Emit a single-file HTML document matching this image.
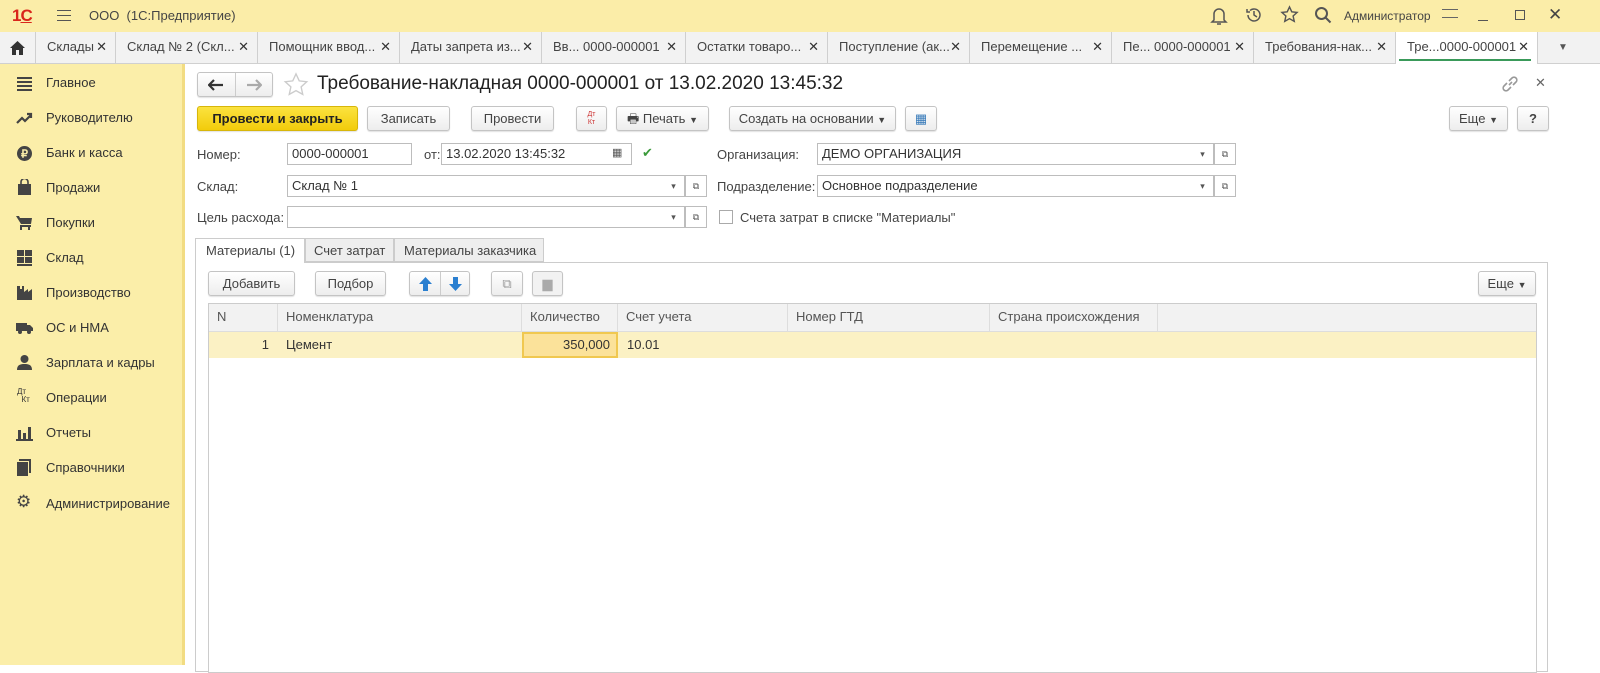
<!DOCTYPE html><html><head><meta charset="utf-8"><style>
*{box-sizing:border-box;margin:0;padding:0}
body{width:1600px;height:665px;overflow:hidden;font-family:"Liberation Sans",sans-serif;font-size:13px;color:#333;background:#fff;position:relative}
.a{position:absolute}
#top{left:0;top:0;width:1600px;height:32px;background:#fbeda8}
#tabs{left:0;top:32px;width:1600px;height:32px;background:#f2f2f2;border-bottom:1px solid #d0d0d0}
.tab{position:absolute;top:0;height:32px;border-right:1px solid #cfcfcf;line-height:30px;padding-left:11px;font-size:13px;color:#444;white-space:nowrap}
.tab .x{position:absolute;right:8px;top:0;font-size:13px;color:#333}
#side{left:0;top:64px;width:185px;height:601px;background:#fbeea9;border-right:3px solid #f2dc82}
.si{position:absolute;left:46px;font-size:13px;color:#333}
.sv{position:absolute;left:16px;width:17px;height:17px}
.btn{position:absolute;height:25px;border:1px solid #c4c4c4;border-radius:3px;background:linear-gradient(#fff,#ededed);text-align:center;line-height:23px;font-size:13px;color:#444;box-shadow:0 1px 1px rgba(0,0,0,.12)}
.inp{position:absolute;height:22px;border:1px solid #bdbdbd;background:#fff;line-height:20px;padding-left:4px;font-size:13px;color:#333}
.lbl{position:absolute;font-size:13px;color:#444}
.dd{position:absolute;width:22px;height:22px;border:1px solid #bdbdbd;background:#fff;font-size:9px;text-align:center;line-height:20px;color:#555}
.th{position:absolute;top:0;height:28px;border-right:1px solid #ddd;line-height:26px;padding-left:8px;color:#555}
</style></head><body>
<div id="top" class="a">
<div class="a" style="left:12px;top:6px;font-weight:bold;color:#d9261c;font-size:17px;letter-spacing:-1px">1<span style="text-decoration:underline">С</span></div>
<div class="a" style="left:57px;top:10px;width:14px;height:11px;border-top:1.5px solid #555;border-bottom:1.5px solid #555"><div style="margin-top:3.5px;border-top:1.5px solid #555"></div></div>
<div class="a" style="left:89px;top:8px;font-size:13px;color:#444">ООО &nbsp;(1С:Предприятие)</div>
<svg class="a" style="left:1210px;top:6px" width="18" height="20" viewBox="0 0 18 20" fill="none" stroke="#555" stroke-width="1.5"><path d="M4 14V8a5 5 0 0 1 10 0v6l2 2H2z M7 18h4"/></svg>
<svg class="a" style="left:1245px;top:6px" width="18" height="18" viewBox="0 0 18 18" fill="none" stroke="#555" stroke-width="1.5"><path d="M3 9a6 6 0 1 0 2-4.5 M2 3v3h3 M9 5v4l3 2"/></svg>
<svg class="a" style="left:1280px;top:5px" width="19" height="19" viewBox="0 0 20 20" fill="none" stroke="#555" stroke-width="1.5"><path d="M10 2l2.4 5.2 5.6.6-4.2 3.8 1.2 5.6L10 14.4 5 17.2l1.2-5.6L2 7.8l5.6-.6z"/></svg>
<svg class="a" style="left:1314px;top:6px" width="18" height="18" viewBox="0 0 18 18" fill="none" stroke="#555" stroke-width="2"><circle cx="7.5" cy="7.5" r="5.5"/><path d="M11.5 11.5l5 5"/></svg>
<div class="a" style="left:1344px;top:9px;font-size:12px;color:#444">Администратор</div>
<div class="a" style="left:1442px;top:9px;width:16px;height:9px;border-top:1.5px solid #666;border-bottom:1.5px solid #666"></div>
<div class="a" style="left:1478px;top:20px;width:10px;border-top:1.5px solid #555"></div>
<div class="a" style="left:1515px;top:10px;width:10px;height:10px;border:1.5px solid #555"></div>
<div class="a" style="left:1548px;top:5px;font-size:17px;color:#444">✕</div>
</div>
<div id="tabs" class="a">
<svg class="a" style="left:10px;top:9px" width="15" height="14" viewBox="0 0 15 14"><path d="M7.5 0L0 7h2v7h4V9h3v5h4V7h2z" fill="#333"/></svg>
<div class="tab" style="left:0;width:36px"></div>
<div class="tab" style="left:36px;width:80px">Склады<span class="x">✕</span></div>
<div class="tab" style="left:116px;width:142px">Склад № 2 (Скл...<span class="x">✕</span></div>
<div class="tab" style="left:258px;width:142px">Помощник ввод...<span class="x">✕</span></div>
<div class="tab" style="left:400px;width:142px">Даты запрета из...<span class="x">✕</span></div>
<div class="tab" style="left:542px;width:144px">Вв... 0000-000001<span class="x">✕</span></div>
<div class="tab" style="left:686px;width:142px">Остатки товаро...<span class="x">✕</span></div>
<div class="tab" style="left:828px;width:142px">Поступление (ак...<span class="x">✕</span></div>
<div class="tab" style="left:970px;width:142px">Перемещение ...<span class="x">✕</span></div>
<div class="tab" style="left:1112px;width:142px">Пе... 0000-000001<span class="x">✕</span></div>
<div class="tab" style="left:1254px;width:142px">Требования-нак...<span class="x">✕</span></div>
<div class="tab" style="left:1396px;width:142px;background:#fff;height:32px">Тре...0000-000001<span class="x">✕</span><div class="a" style="left:3px;right:6px;bottom:3px;border-top:2px solid #3a9a5a"></div></div>
<div class="a" style="left:1558px;top:10px;font-size:10px;color:#555">▼</div>
</div>
<div id="side" class="a">
<svg class="sv" style="top:11px" viewBox="0 0 17 17" fill="#444"><rect x="1" y="2" width="15" height="2"/><rect x="1" y="6" width="15" height="2"/><rect x="1" y="10" width="15" height="2"/><rect x="1" y="14" width="15" height="2"/></svg><div class="si" style="top:11px">Главное</div>
<svg class="sv" style="top:46px" viewBox="0 0 17 17" fill="none" stroke="#444" stroke-width="2.2"><path d="M1 13l5-5 3 3 6-6 M11 4h4v4"/></svg><div class="si" style="top:46px">Руководителю</div>
<svg class="sv" style="top:81px" viewBox="0 0 17 17"><circle cx="8.5" cy="8.5" r="7.5" fill="#444"/><text x="8.5" y="12.5" font-size="11" font-weight="bold" text-anchor="middle" fill="#fbeea9" font-family="Liberation Sans">₽</text></svg><div class="si" style="top:81px">Банк и касса</div>
<svg class="sv" style="top:115px" viewBox="0 0 17 17" fill="#444"><path d="M2 5h13v11H2z"/><path d="M5 5V3a3.5 3.5 0 0 1 7 0v2" stroke="#444" fill="none" stroke-width="1.6"/></svg><div class="si" style="top:116px">Продажи</div>
<svg class="sv" style="top:150px" viewBox="0 0 17 17" fill="#444"><path d="M0 2h3l1 2h12l-1 6H5z"/><rect x="4" y="11" width="11" height="2"/><rect x="4" y="13" width="2" height="3"/><rect x="12" y="13" width="2" height="3"/></svg><div class="si" style="top:151px">Покупки</div>
<svg class="sv" style="top:185px" viewBox="0 0 17 17" fill="#444"><rect x="1" y="1" width="7" height="6"/><rect x="9" y="1" width="7" height="6"/><rect x="1" y="8" width="7" height="6"/><rect x="9" y="8" width="7" height="6"/><rect x="1" y="15" width="15" height="2"/></svg><div class="si" style="top:186px">Склад</div>
<svg class="sv" style="top:220px" viewBox="0 0 17 17" fill="#444"><path d="M1 16V2h3v3h2V2h2v6l4-3v3l4-3v11z"/></svg><div class="si" style="top:221px">Производство</div>
<svg class="sv" style="top:255px" viewBox="0 0 17 17" fill="#444"><rect x="0" y="4" width="11" height="8"/><path d="M11 6h3l3 3v3h-6z"/><circle cx="4" cy="13" r="2"/><circle cx="13" cy="13" r="2"/></svg><div class="si" style="top:256px">ОС и НМА</div>
<svg class="sv" style="top:290px" viewBox="0 0 17 17" fill="#444"><circle cx="8.5" cy="5" r="4"/><path d="M1 16c0-5 3-6 7.5-6s7.5 1 7.5 6z"/></svg><div class="si" style="top:291px">Зарплата и кадры</div>
<div class="a" style="left:17px;top:324px;font-size:8px;line-height:8px;color:#333">Дт<br>&nbsp;&nbsp;Кт</div><div class="si" style="top:326px">Операции</div>
<svg class="sv" style="top:360px" viewBox="0 0 17 17" fill="#444"><rect x="2" y="6" width="3" height="9"/><rect x="7" y="9" width="3" height="6"/><rect x="12" y="3" width="3" height="12"/><rect x="0" y="15" width="17" height="2"/></svg><div class="si" style="top:361px">Отчеты</div>
<svg class="sv" style="top:395px" viewBox="0 0 17 17" fill="#444"><rect x="1" y="3" width="11" height="14"/><rect x="13" y="1" width="2" height="13"/><rect x="3" y="0" width="12" height="2"/></svg><div class="si" style="top:396px">Справочники</div>
<div class="a" style="left:16px;top:428px;font-size:17px;color:#444">⚙︎</div><div class="si" style="top:432px">Администрирование</div>
</div>
<!-- form -->
<div class="btn" style="left:197px;top:72px;width:76px;height:25px"><span style="position:absolute;left:37px;top:0;height:23px;border-left:1px solid #ccc"></span>
<svg class="a" style="left:10px;top:6px" width="16" height="12" viewBox="0 0 16 12"><path d="M1 6h14 M6 1L1 6l5 5" stroke="#333" stroke-width="2.2" fill="none"/></svg>
<svg class="a" style="left:48px;top:6px" width="16" height="12" viewBox="0 0 16 12"><path d="M1 6h14 M10 1l5 5-5 5" stroke="#aaa" stroke-width="2.2" fill="none"/></svg></div>
<svg class="a" style="left:283px;top:72px" width="26" height="25" viewBox="0 0 20 20" fill="none" stroke="#ccc" stroke-width="1.1"><path d="M10 1.5l2.6 5.6 6 .7-4.5 4.1 1.3 6L10 14.9 4.6 17.9l1.3-6L1.4 7.8l6-.7z"/></svg>
<div class="a" style="left:317px;top:73px;font-size:19px;color:#222">Требование-накладная 0000-000001 от 13.02.2020 13:45:32</div>
<svg class="a" style="left:1501px;top:75px" width="18" height="18" viewBox="0 0 18 18" fill="none" stroke="#999" stroke-width="1.6"><path d="M8 10l3-3 M6 8l-3 3a2.5 2.5 0 0 0 4 4l3-3 M12 10l3-3a2.5 2.5 0 0 0-4-4L8 6"/></svg>
<div class="a" style="left:1535px;top:75px;font-size:13px;color:#666">✕</div>
<div class="btn" style="left:197px;top:106px;width:161px;background:linear-gradient(#fbe33f,#f2cc0b);border-color:#d7b60a;color:#222;font-weight:bold">Провести и закрыть</div>
<div class="btn" style="left:367px;top:106px;width:83px">Записать</div>
<div class="btn" style="left:471px;top:106px;width:83px">Провести</div>
<div class="btn" style="left:576px;top:106px;width:31px;font-size:7px;line-height:8px;padding-top:4px;color:#c33">Дт<br>Кт</div>
<div class="btn" style="left:616px;top:106px;width:93px">🖶 Печать <span style="font-size:9px">▼</span></div>
<div class="btn" style="left:729px;top:106px;width:167px">Создать на основании <span style="font-size:9px">▼</span></div>
<div class="btn" style="left:905px;top:106px;width:32px;color:#3478b8">▦</div>
<div class="btn" style="left:1449px;top:106px;width:59px">Еще <span style="font-size:9px">▼</span></div>
<div class="btn" style="left:1517px;top:106px;width:32px;font-weight:bold">?</div>
<div class="lbl" style="left:197px;top:147px">Номер:</div>
<div class="inp" style="left:287px;top:143px;width:125px">0000-000001</div>
<div class="lbl" style="left:424px;top:147px">от:</div>
<div class="inp" style="left:441px;top:143px;width:191px">13.02.2020 13:45:32</div>
<div class="a" style="left:612px;top:146px;font-size:11px;color:#555">▦</div>
<div class="a" style="left:642px;top:145px;font-size:13px;color:#3a9a3a">✔</div>
<div class="lbl" style="left:717px;top:147px">Организация:</div>
<div class="inp" style="left:817px;top:143px;width:397px">ДЕМО ОРГАНИЗАЦИЯ</div>
<div class="dd" style="left:1192px;top:143px;border-left:none">▾</div><div class="dd" style="left:1214px;top:143px">⧉</div>
<div class="lbl" style="left:197px;top:179px">Склад:</div>
<div class="inp" style="left:287px;top:175px;width:398px">Склад № 1</div>
<div class="dd" style="left:663px;top:175px;border-left:none">▾</div><div class="dd" style="left:685px;top:175px">⧉</div>
<div class="lbl" style="left:717px;top:179px">Подразделение:</div>
<div class="inp" style="left:817px;top:175px;width:397px">Основное подразделение</div>
<div class="dd" style="left:1192px;top:175px;border-left:none">▾</div><div class="dd" style="left:1214px;top:175px">⧉</div>
<div class="lbl" style="left:197px;top:210px">Цель расхода:</div>
<div class="inp" style="left:287px;top:206px;width:398px"></div>
<div class="dd" style="left:663px;top:206px;border-left:none">▾</div><div class="dd" style="left:685px;top:206px">⧉</div>
<div class="a" style="left:719px;top:210px;width:14px;height:14px;border:1px solid #aaa;background:#fff"></div>
<div class="lbl" style="left:740px;top:210px">Счета затрат в списке "Материалы"</div>
<!-- tabs -->
<div class="a" style="left:195px;top:262px;width:1353px;height:410px;border:1px solid #ccc"></div>
<div class="a" style="left:195px;top:238px;width:110px;height:25px;border:1px solid #ccc;border-bottom:none;background:#fff;line-height:23px;padding-left:10px;color:#444">Материалы (1)</div>
<div class="a" style="left:305px;top:238px;width:89px;height:24px;border:1px solid #ccc;background:#eee;line-height:23px;padding-left:8px;color:#444">Счет затрат</div>
<div class="a" style="left:394px;top:238px;width:150px;height:24px;border:1px solid #ccc;background:#eee;line-height:23px;padding-left:9px;color:#444">Материалы заказчика</div>
<div class="btn" style="left:208px;top:271px;width:87px">Добавить</div>
<div class="btn" style="left:315px;top:271px;width:71px">Подбор</div>
<div class="btn" style="left:409px;top:271px;width:61px"><span style="position:absolute;left:30px;top:0;height:23px;border-left:1px solid #ccc"></span>
<svg class="a" style="left:9px;top:5px" width="13" height="14" viewBox="0 0 13 14"><path d="M6.5 0L0 7h4v7h5V7h4z" fill="#2a7fd0"/></svg>
<svg class="a" style="left:39px;top:5px" width="13" height="14" viewBox="0 0 13 14"><path d="M6.5 14L0 7h4V0h5v7h4z" fill="#2a7fd0"/></svg></div>
<div class="btn" style="left:491px;top:271px;width:32px;color:#999">⧉</div>
<div class="btn" style="left:532px;top:271px;width:31px;color:#aaa;background:#f2f2f2">▆</div>
<div class="btn" style="left:1478px;top:271px;width:58px">Еще <span style="font-size:9px">▼</span></div>
<div class="a" style="left:208px;top:303px;width:1329px;height:370px;border:1px solid #ccc;background:#fff">
<div class="a" style="left:0;top:0;width:1327px;height:28px;background:#f2f2f2;border-bottom:1px solid #ddd">
<div class="th" style="left:0;width:69px">N</div>
<div class="th" style="left:69px;width:244px">Номенклатура</div>
<div class="th" style="left:313px;width:96px">Количество</div>
<div class="th" style="left:409px;width:170px">Счет учета</div>
<div class="th" style="left:579px;width:202px">Номер ГТД</div>
<div class="th" style="left:781px;width:168px">Страна происхождения</div>
</div>
<div class="a" style="left:0;top:28px;width:1327px;height:26px;background:#fbf1c4;line-height:26px">
<div class="a" style="left:0;width:60px;text-align:right">1</div>
<div class="a" style="left:77px">Цемент</div>
<div class="a" style="left:313px;top:0;width:96px;height:26px;background:#fbe29a;border:2px solid #f0c850;text-align:right;padding-right:6px;line-height:22px">350,000</div>
<div class="a" style="left:418px">10.01</div>
</div>
</div>
</body></html>
